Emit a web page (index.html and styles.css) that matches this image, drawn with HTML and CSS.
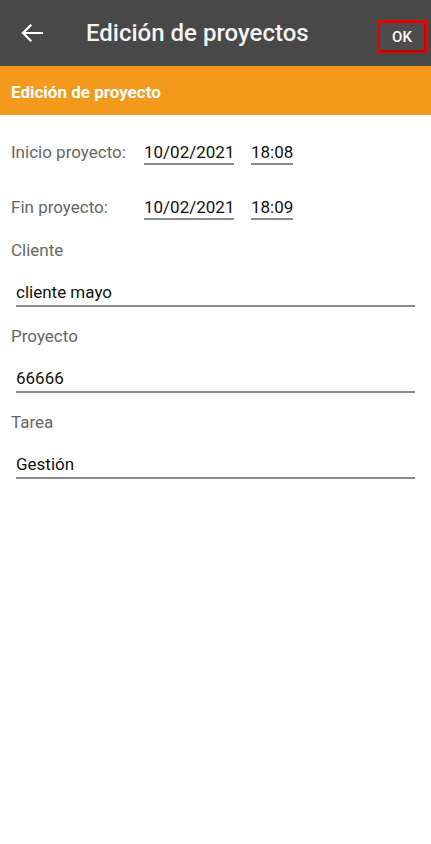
FILE: index.html
```html
<!DOCTYPE html>
<html lang="es">
<head>
    <meta charset="UTF-8">
    <meta name="viewport" content="width=device-width, initial-scale=1.0">
    <title>Edición de proyectos</title>
    <link rel="stylesheet" href="styles.css">
</head>
<body>
    <header class="toolbar">
        <button class="back-btn" aria-label="Volver">
            <svg width="22" height="18" viewBox="0 0 22 18">
                <path d="M21 9H2M9.5 1.5L2 9l7.5 7.5" fill="none" stroke="#fff" stroke-width="2.2" stroke-linecap="square"/>
            </svg>
        </button>
        <h1 class="title">Edición de proyectos</h1>
        <div class="ok-frame">
            <button class="ok-btn">OK</button>
        </div>
    </header>

    <div class="section-bar">Edición de proyecto</div>

    <div class="form">
        <div class="date-row">
            <span class="row-label">Inicio proyecto:</span>
            <span class="field date">10/02/2021</span>
            <span class="field time">18:08</span>
        </div>
        <div class="date-row last">
            <span class="row-label">Fin proyecto:</span>
            <span class="field date">10/02/2021</span>
            <span class="field time">18:09</span>
        </div>

        <div class="form-group">
            <label>Cliente</label>
            <div class="input">cliente mayo</div>
        </div>
        <div class="form-group">
            <label>Proyecto</label>
            <div class="input">66666</div>
        </div>
        <div class="form-group">
            <label>Tarea</label>
            <div class="input">Gestión</div>
        </div>
    </div>
</body>
</html>
```

FILE: styles.css
```css
* {
    margin: 0;
    padding: 0;
    box-sizing: border-box;
}

body {
    font-family: Roboto, "Noto Sans", Arial, sans-serif;
    background-color: #fff;
    color: #111;
}

.toolbar {
    height: 66px;
    background-color: #484848;
    display: flex;
    align-items: center;
}

.back-btn {
    background: none;
    border: none;
    width: 64px;
    padding-left: 21px;
    display: flex;
    align-items: center;
    margin-top: -1px;
}

.title {
    flex: 1;
    margin-left: 22px;
    color: #f4f4f4;
    font-size: 24px;
    font-weight: 500;
    margin-top: -1px;
}

.ok-frame {
    width: 50px;
    height: 33px;
    border: 3px solid #f20000;
    margin-right: 4px;
    margin-top: 7px;
    display: flex;
}

.ok-btn {
    flex: 1;
    background-color: #4c4c4c;
    border: none;
    color: #fff;
    font-family: Roboto, Arial, sans-serif;
    font-size: 15px;
    font-weight: 500;
    box-shadow: 0 1px 3px rgba(0, 0, 0, 0.35);
}

.section-bar {
    height: 49px;
    background-color: #f3991b;
    color: #fff;
    font-size: 17px;
    font-weight: 700;
    padding-left: 11px;
    padding-top: 2px;
    display: flex;
    align-items: center;
}

.form {
    padding: 27px 16px 0 11px;
}

.date-row {
    display: flex;
    align-items: flex-end;
    margin-bottom: 32px;
}

.date-row.last {
    margin-bottom: 20px;
}

.row-label {
    width: 133px;
    font-size: 17px;
    line-height: 20px;
    color: #666;
    padding-bottom: 3px;
}

.field {
    font-size: 17px;
    line-height: 20px;
    color: #111;
    padding-bottom: 1px;
    border-bottom: 2px solid #8a8a8a;
}

.date {
    width: 90px;
}

.time {
    width: 42px;
    margin-left: 17px;
}

.form-group {
    margin-bottom: 19px;
}

.form-group label {
    display: block;
    font-size: 17px;
    line-height: 20px;
    color: #666;
    margin-bottom: 22px;
}

.form-group .input {
    margin-left: 5px;
    font-size: 17px;
    line-height: 20px;
    padding-bottom: 3px;
    border-bottom: 2px solid #8a8a8a;
}
```
